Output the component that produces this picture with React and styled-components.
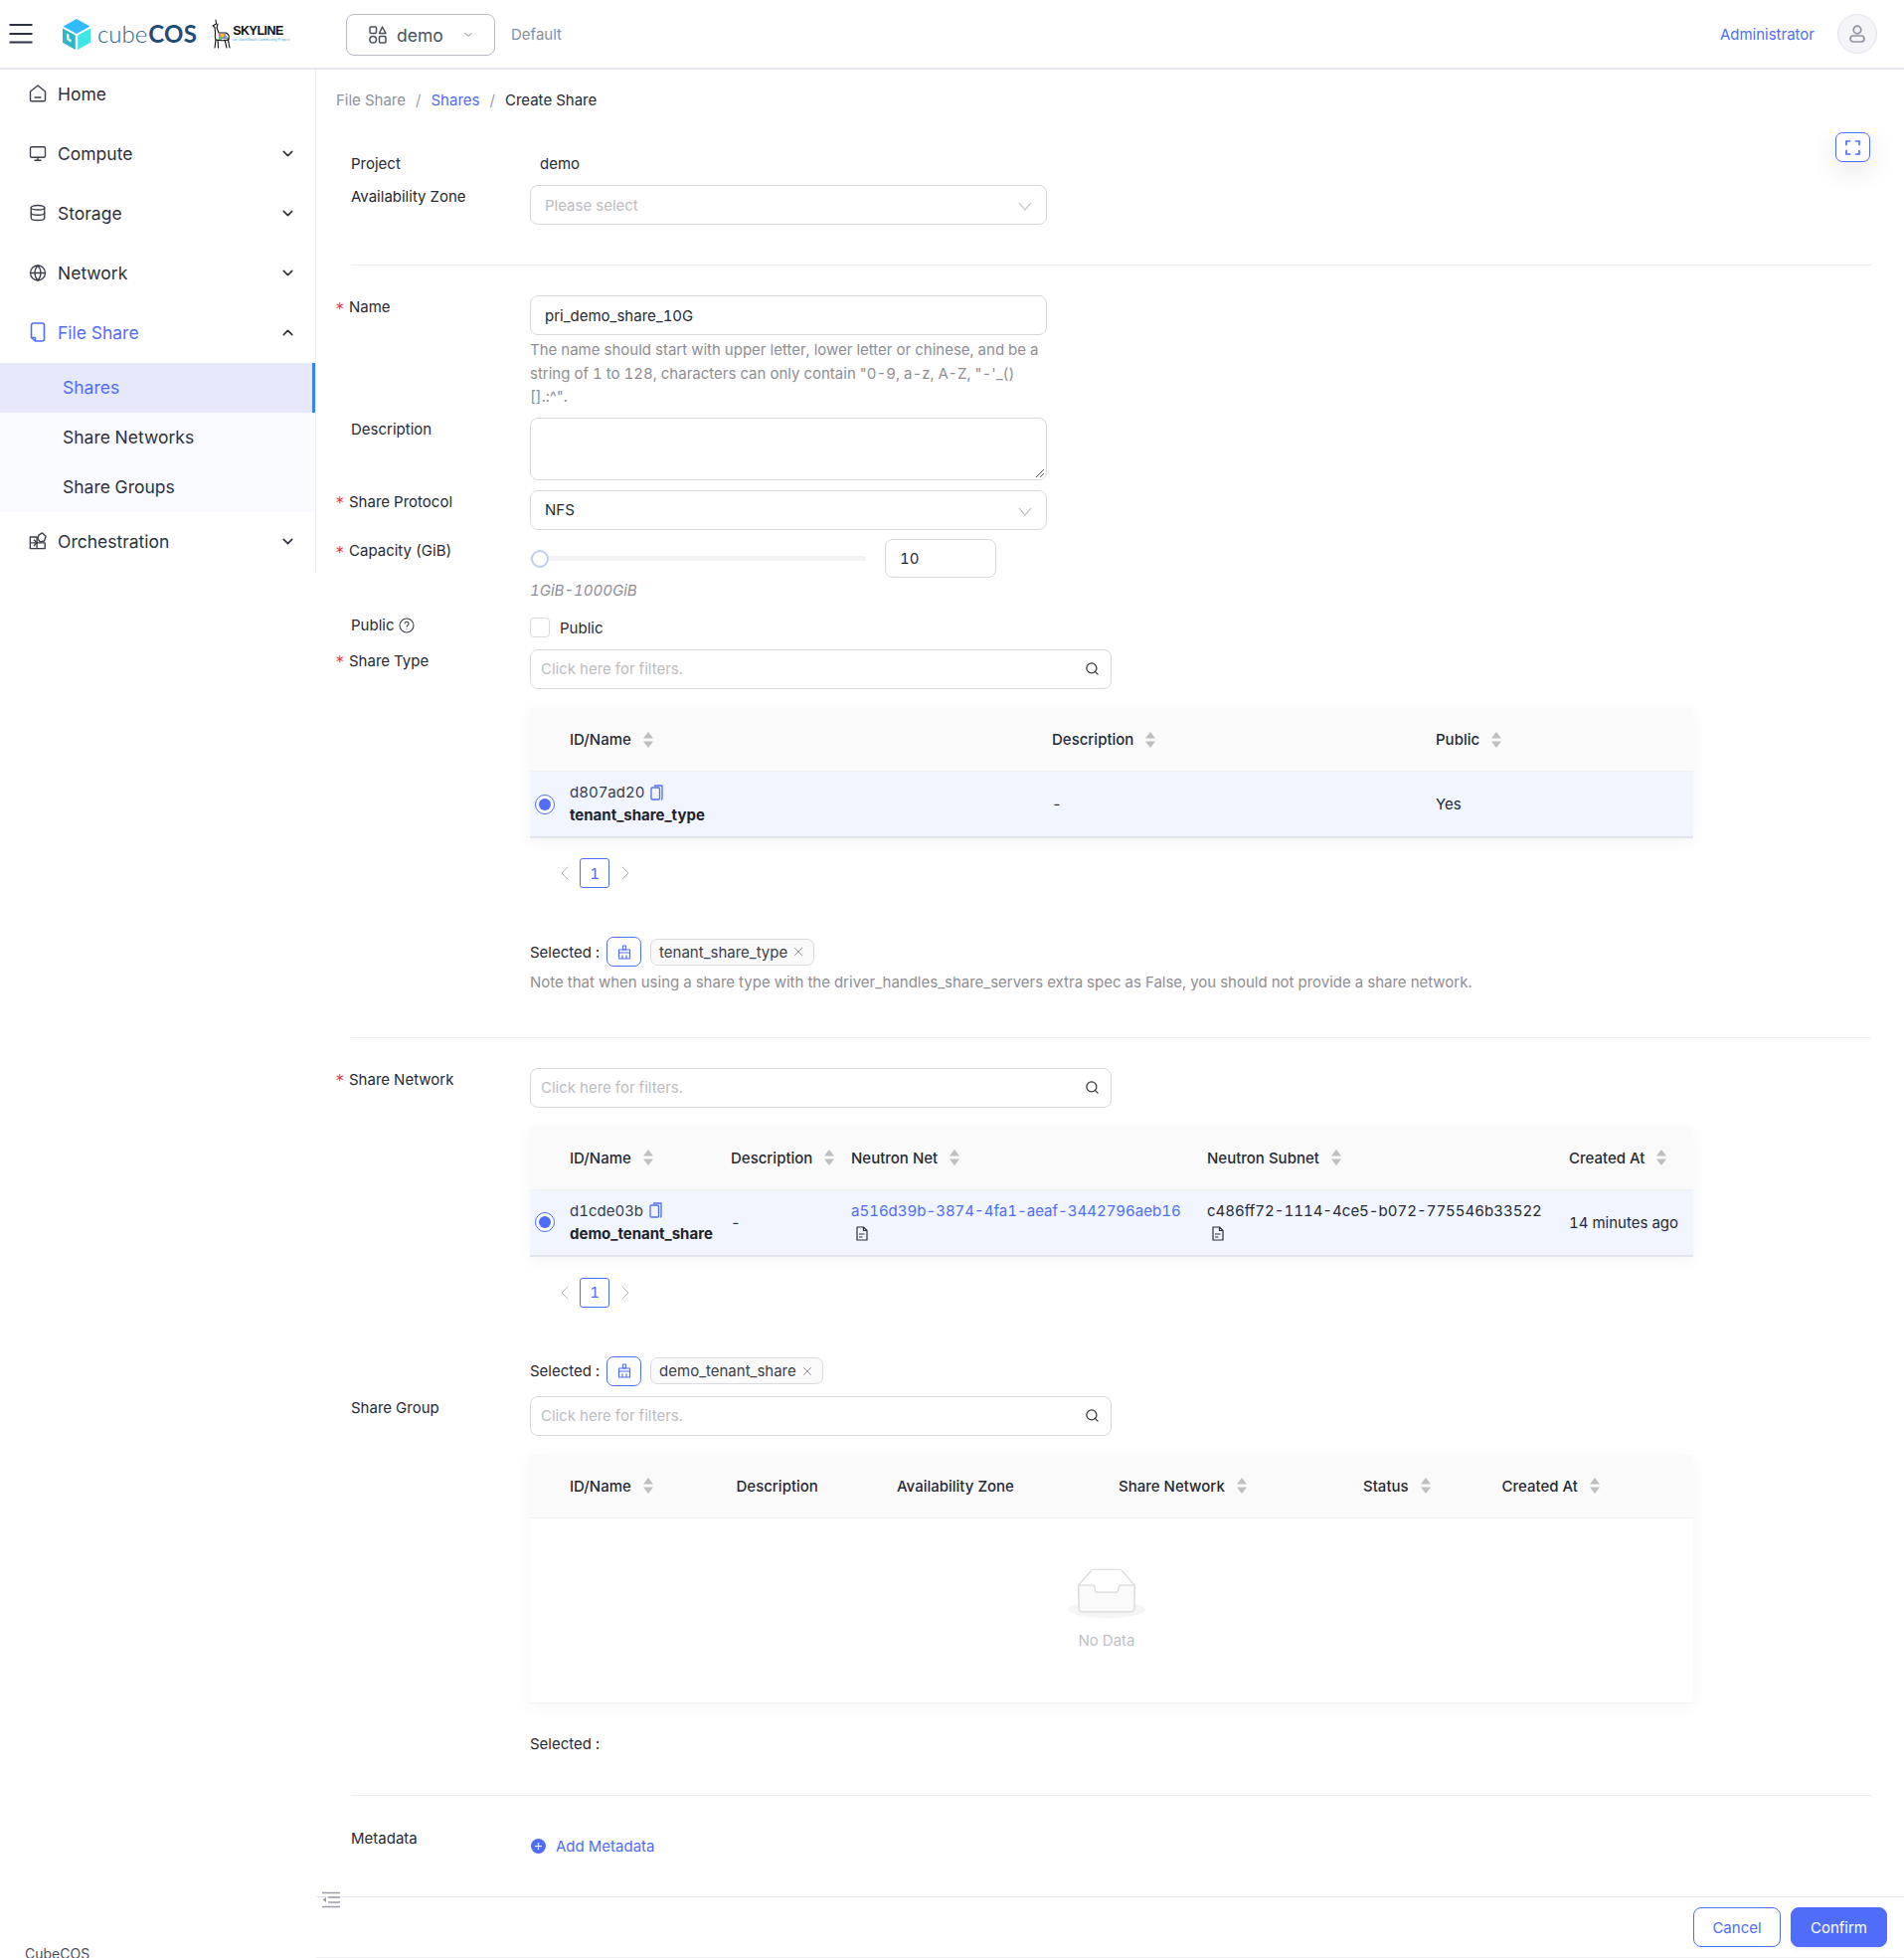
import React from "react";
import styled, { createGlobalStyle } from "styled-components";
import { Monitor, Database, Globe, ChevronDown, ChevronUp, ChevronLeft, ChevronRight, Search, X } from "lucide-react";

const Global = createGlobalStyle`
  html, body { margin: 0; padding: 0; background: #fff; }
  body {
    font-family: "Inter", "Liberation Sans", sans-serif;
    color: #262a33;
    font-size: 15px;
    font-variant: tabular-nums;
    font-feature-settings: "tnum";
  }
  * { box-sizing: border-box; }
`;

const primary = "#4f6df9";

const Page = styled.div`
  width: 1915px;
  height: 1969px;
  overflow: hidden;
  display: flex;
  flex-direction: column;
  background: #fff;
`;

/* ---------- top bar ---------- */
const TopBar = styled.header`
  height: 70px;
  flex: none;
  display: flex;
  align-items: center;
  border-bottom: 2px solid #e8e8f2;
  padding-right: 27px;
`;
const Burger = styled.svg`
  width: 24px;
  height: 20px;
  margin-left: 9px;
`;
const Logo = styled.div`
  display: flex;
  align-items: center;
  margin-left: 30px;
  width: 302px;
`;
const LogoWord = styled.span`
  font-size: 24px;
  line-height: 30px;
  font-weight: 300;
  color: #2f6189;
  margin-left: 7px;
  font-family: "Lato", "Inter", sans-serif;
`;
const LogoStrong = styled.b`
  font-weight: 700;
  color: #1e4c78;
  letter-spacing: 0.3px;
  margin-left: 1px;
`;
const SkyWrap = styled.div`
  display: flex;
  align-items: center;
  margin-left: 13px;
`;
const SkyText = styled.div`
  display: flex;
  flex-direction: column;
  margin-left: 1px;
`;
const SkyName = styled.span`
  font-family: "Liberation Sans", sans-serif;
  font-weight: 700;
  font-size: 12.5px;
  line-height: 13px;
  letter-spacing: -0.5px;
  color: #111;
`;
const SkySub = styled.span`
  font-family: "Liberation Sans", sans-serif;
  font-size: 3.8px;
  line-height: 5px;
  color: #45a8d8;
  white-space: nowrap;
`;
const ProjectButton = styled.div`
  width: 150px;
  height: 42px;
  margin: 2px 0 0 -17px;
  border: 1px solid #b8bbc7;
  border-radius: 8px;
  display: flex;
  align-items: center;
  padding-left: 22px;
  font-size: 17.5px;
  color: #4a4f5c;
`;
const ProjectName = styled.span`
  margin-left: 10px;
  flex: 1;
`;
const ProjectChevron = styled(ChevronDown)`
  margin-right: 20px;
  color: #7b7f8c;
`;
const DomainName = styled.span`
  margin-left: 16px;
  font-size: 15px;
  color: #8a8e9a;
`;
const Spacer = styled.div`
  flex: 1;
`;
const AdminName = styled.span`
  font-size: 15px;
  color: ${primary};
`;
const Avatar = styled.div`
  width: 40px;
  height: 40px;
  border-radius: 50%;
  margin-left: 23px;
  background: #f5f5f9;
  border: 1px solid #e3e3ee;
  display: flex;
  align-items: center;
  justify-content: center;
`;

/* ---------- body / sidebar ---------- */
const Body = styled.div`
  flex: 1;
  display: flex;
  min-height: 0;
`;
const LeftColumn = styled.aside`
  width: 318px;
  flex: none;
  display: flex;
  flex-direction: column;
`;
const Menu = styled.nav`
  height: 505px;
  border-right: 1px solid #ececf2;
`;
const MenuItem = styled.div`
  height: 50px;
  margin-bottom: ${(p) => p.$mb ?? 10}px;
  display: flex;
  align-items: center;
  padding: 0 19px 2px 29px;
  font-size: 17.5px;
  color: ${(p) => (p.$active ? primary : "#2d313b")};
`;
const MenuIcon = styled.span`
  width: 18px;
  height: 20px;
  display: flex;
  align-items: center;
  justify-content: center;
  margin-right: 11px;
`;
const MenuLabel = styled.span`
  flex: 1;
`;
const SubMenu = styled.div`
  background: #f9faff;
  margin-bottom: 5px;
`;
const SubItem = styled.div`
  height: 50px;
  display: flex;
  align-items: center;
  padding: 0 0 2px 63px;
  font-size: 17.5px;
  color: ${(p) => (p.$active ? primary : "#2d313b")};
  background: ${(p) => (p.$active ? "#e6e9fb" : "transparent")};
  border-right: ${(p) => (p.$active ? "3px solid #3b82f6" : "none")};
`;
const Copyright = styled.div`
  margin-top: auto;
  margin-bottom: -6px;
  height: 20px;
  line-height: 20px;
  padding-left: 25px;
  font-size: 14px;
  color: #4a4f5c;
`;

/* ---------- main ---------- */
const Main = styled.main`
  flex: 1;
  min-width: 0;
  position: relative;
  display: flex;
  flex-direction: column;
`;
const Breadcrumb = styled.div`
  margin: 21px 0 0 20px;
  height: 20px;
  line-height: 20px;
  display: flex;
  font-size: 15px;
`;
const Crumb = styled.span`
  color: ${(p) => p.$color};
`;
const CrumbSep = styled.span`
  width: 25.5px;
  text-align: center;
  color: #9a9daa;
`;
const FullscreenButton = styled.div`
  position: absolute;
  right: 34px;
  top: 63px;
  width: 35px;
  height: 30px;
  border: 1px solid ${primary};
  border-radius: 7px;
  background: #fff;
  display: flex;
  align-items: center;
  justify-content: center;
  box-shadow: 0 8px 28px rgba(0, 0, 0, 0.1);
  clip-path: inset(0 -50px -50px -50px);
`;
const Form = styled.div`
  flex: 1;
  margin: 42px 33px 0 20px;
`;
const Row = styled.div`
  display: grid;
  grid-template-columns: 195px 1fr;
  margin-top: ${(p) => p.$mt ?? 0}px;
  min-height: ${(p) => p.$h ?? 0}px;
`;
const Label = styled.label`
  height: 24px;
  line-height: 24px;
  display: flex;
  align-items: center;
  font-size: 15px;
  padding-left: ${(p) => (p.$required ? 0 : 15)}px;
  color: #262a33;
`;
const Star = styled.span`
  width: 13px;
  color: #f5222d;
  font-family: "DejaVu Sans", sans-serif;
  font-size: 15px;
  line-height: 15px;
  padding-top: 4px;
`;
const Control = styled.div`
  min-width: 0;
  padding-top: ${(p) => p.$pt ?? 0}px;
`;
const StaticValue = styled.div`
  line-height: 24px;
  padding-left: 10px;
  font-size: 15px;
`;
const Divider = styled.div`
  height: 1px;
  margin: ${(p) => p.$mt}px 0 0 15px;
  background: #ededf3;
`;
const InputBox = styled.div`
  width: ${(p) => p.$w ?? 520}px;
  height: ${(p) => p.$h ?? 40}px;
  border: 1px solid #d9d9de;
  border-radius: 8px;
  display: flex;
  align-items: center;
  justify-content: space-between;
  padding: 0 ${(p) => p.$pr ?? 14}px 0 ${(p) => p.$pl ?? 14}px;
  background: #fff;
  font-size: 15px;
  color: #262a33;
  position: relative;
`;
const Placeholder = styled.span`
  color: #bcbcc2;
`;
const SelectArrow = styled.svg`
  width: 14px;
  height: 9px;
  margin-top: 3px;
`;
const ResizeGrip = styled.svg`
  position: absolute;
  right: 1px;
  bottom: 1px;
`;
const Help = styled.div`
  margin-top: ${(p) => p.$mt ?? 3}px;
  width: ${(p) => p.$w ?? "520px"};
  font-size: 15px;
  line-height: 23.5px;
  color: #8e8e93;
`;
const HelpItalic = styled(Help)`
  font-style: italic;
  margin-top: 1px;
`;
const SliderRow = styled.div`
  display: flex;
  align-items: center;
  gap: 19px;
`;
const SliderTrack = styled.div`
  width: 338px;
  height: 5px;
  border-radius: 3px;
  background: #f3f3f5;
  position: relative;
`;
const SliderHandle = styled.div`
  position: absolute;
  left: 1px;
  top: -6px;
  width: 18px;
  height: 18px;
  border-radius: 50%;
  background: #fff;
  border: 2px solid #bfcdf9;
`;
const CheckRow = styled.div`
  display: flex;
  align-items: center;
  padding-top: 3px;
`;
const CheckBox = styled.span`
  width: 20px;
  height: 20px;
  border: 1px solid #d9d9de;
  border-radius: 4px;
  margin-right: 10px;
`;
const HelpIcon = styled.svg`
  margin-left: 5px;
`;

/* ---------- tables ---------- */
const Table = styled.div`
  width: 1170px;
  margin-top: ${(p) => p.$mt ?? 16}px;
  box-shadow: 0 4px 16px rgba(0, 0, 0, 0.045);
`;
const TableHead = styled.div`
  display: grid;
  grid-template-columns: ${(p) => p.$cols};
  height: 64px;
  background: #fafafa;
  border-bottom: 1px solid #f1f1f4;
  align-items: center;
  font-size: 15px;
  font-weight: 500;
  color: #262a33;
`;
const HeadCell = styled.div`
  display: flex;
  align-items: center;
  gap: 12px;
  padding-left: ${(p) => p.$pl ?? 0}px;
`;
const TableRow = styled.div`
  display: grid;
  grid-template-columns: ${(p) => p.$cols};
  height: 67px;
  background: #f0f5ff;
  border-bottom: 2px solid #e1e3ee;
  align-items: center;
  font-size: 15px;
`;
const TableEmpty = styled.div`
  height: 186px;
  display: flex;
  flex-direction: column;
  align-items: center;
  padding: 50px 10px 0 0;
  border-bottom: 1px solid #f3f3f6;
`;
const EmptyText = styled.span`
  margin-top: 13px;
  font-size: 15px;
  color: #bfbfc4;
  line-height: 20px;
`;
const NameCell = styled.div`
  display: flex;
  align-items: center;
  padding-left: 5px;
`;
const Radio = styled.span`
  width: 20px;
  height: 20px;
  margin-right: 15px;
  border: 1px solid ${primary};
  border-radius: 50%;
  display: flex;
  align-items: center;
  justify-content: center;
  background: #fff;
  &::after {
    content: "";
    width: 12px;
    height: 12px;
    border-radius: 50%;
    background: ${primary};
  }
`;
const IdBlock = styled.div`
  display: flex;
  flex-direction: column;
  line-height: 23px;
  margin-top: -1px;
`;
const IdLine = styled.div`
  display: flex;
  align-items: center;
  gap: 6px;
  color: #383c46;
`;
const BoldName = styled.b`
  font-weight: 700;
  color: #20232b;
`;
const HashBlock = styled.div`
  display: flex;
  flex-direction: column;
  line-height: 23px;
  margin-top: -1px;
`;
const HashText = styled.span`
  color: ${(p) => p.$color ?? "#262a33"};
`;
const FileIconWrap = styled.div`
  height: 23px;
  padding-left: 5px;
  display: flex;
  align-items: center;
`;
const Pager = styled.div`
  margin: ${(p) => p.$mt}px 0 0 23px;
  display: flex;
  align-items: center;
  gap: 3px;
  color: #b5b5ba;
`;
const PageNumber = styled.span`
  width: 30px;
  height: 30px;
  margin-right: 1px;
  border: 1px solid ${primary};
  border-radius: 3px;
  display: flex;
  align-items: center;
  justify-content: center;
  color: ${primary};
  font-size: 15px;
`;
const SelectedRow = styled.div`
  display: flex;
  align-items: center;
  margin-top: ${(p) => p.$mt}px;
  height: 30px;
  font-size: 15px;
`;
const BroomButton = styled.span`
  width: 35px;
  height: 30px;
  margin-left: 7px;
  border: 1px solid ${primary};
  border-radius: 7px;
  display: flex;
  align-items: center;
  justify-content: center;
`;
const Tag = styled.span`
  height: 27px;
  margin-left: 9px;
  padding: 0 8px;
  display: flex;
  align-items: center;
  gap: 4px;
  border: 1px solid #dcdce0;
  border-radius: 7px;
  background: #fafafa;
  font-size: 15px;
  color: #3a3e48;
`;
const TagClose = styled(X)`
  color: #7a7a7f;
`;
const AddLink = styled.div`
  display: flex;
  align-items: center;
  gap: 10px;
  color: ${primary};
  font-size: 15px;
  padding-left: 1px;
  height: 24px;
`;
const AddDot = styled.span`
  width: 15px;
  height: 15px;
  border-radius: 50%;
  background: ${primary};
  color: #fff;
  display: flex;
  align-items: center;
  justify-content: center;
`;

/* ---------- footer ---------- */
const ActionBar = styled.footer`
  position: relative;
  height: 62px;
  flex: none;
  border-top: 1px solid #e3e3ec;
  border-bottom: 1px solid #f0f0f4;
  display: flex;
  justify-content: flex-end;
  gap: 10px;
  padding: 10px 17px 0 0;
`;
const CollapseIcon = styled.svg`
  position: absolute;
  left: 6px;
  top: -6px;
`;
const GhostButton = styled.button`
  width: 88px;
  height: 40px;
  font: inherit;
  font-size: 15px;
  background: #fff;
  color: ${primary};
  border: 1px solid ${primary};
  border-radius: 8px;
`;
const PrimaryButton = styled(GhostButton)`
  width: 97px;
  background: ${primary};
  color: #fff;
  box-shadow: 0 2px 4px rgba(0, 0, 0, 0.06);
`;

/* ---------- drawings ---------- */
const CubeLogo = () => (
  <svg width="28" height="31" viewBox="0 0 28 31">
    <path d="M14 0 L27.5 7.5 L14 15 L0.5 7.5 Z" fill="#33bbff" />
    <path d="M0 9.5 L12.8 16.6 V31 L0 23.7 Z M4.2 14.5 V21 L8.6 23.6 V21 L6.4 19.8 V15.8 Z" fill="#2fb7c6" fillRule="evenodd" />
    <path d="M28 9.5 L15.2 16.6 V31 L28 23.7 Z" fill="#3fe6e6" />
  </svg>
);
const Llama = () => (
  <svg width="22" height="30" viewBox="0 0 22 30" fill="none" stroke="#111" strokeWidth="1.1" strokeLinecap="round" strokeLinejoin="round">
    <path d="M6 1 L6.5 5 L3 7 L5 8.5 L5.5 14 C5 17 5 19 6 21 L5 29 M8 21 L8.5 29 M15 21 L17 29 M18 19 L20 29" />
    <path d="M8 5 L7 9 L9 14 L16 14 C19 15 20 17 19 21 C15 22 10 22 6 21" />
    <path d="M9 15 h7 v5 h-7 z" fill="#e86ac0" stroke="none" />
    <path d="M11 15 h3 v3 h-3 z" fill="#f5c431" stroke="none" />
    <path d="M14 17 h3 v3 h-3 z" fill="#4aa3e8" stroke="none" />
    <path d="M9 18 h3 v3 h-3 z" fill="#54c06a" stroke="none" />
  </svg>
);
const HomeIcon = () => (
  <svg width="18" height="18" viewBox="0 0 18 18" fill="none" stroke="#3a3e4a" strokeWidth="1.4" strokeLinejoin="round" strokeLinecap="round">
    <path d="M1.5 7 L9 1 L16.5 7 V15.5 a1.2 1.2 0 0 1 -1.2 1.2 H2.7 a1.2 1.2 0 0 1 -1.2 -1.2 Z" />
    <path d="M6 13 H12" />
  </svg>
);
const FileShareIcon = () => (
  <svg width="16" height="20" viewBox="0 0 16 20" fill="none" stroke={primary} strokeWidth="1.6" strokeLinejoin="round">
    <path d="M3.5 1 H12.5 a2 2 0 0 1 2 2 V17 a2 2 0 0 1 -2 2 H5.5 L1.5 15.5 V3 a2 2 0 0 1 2 -2 Z" />
    <path d="M1.5 15.5 H5.5 V19" />
  </svg>
);
const OrchestrationIcon = () => (
  <svg width="20" height="20" viewBox="0 0 20 20" fill="none" stroke="#3a3e4a" strokeWidth="1.5" strokeLinejoin="round">
    <path d="M1.5 5.5 H9 V18.5 H1.5 Z" />
    <path d="M1.5 12 H18 V18.5 H9" />
    <path d="M9 12 L5.5 8.5 M9 12 L5.5 15.5" />
    <path d="M11 3.5 L15 1 L19 4.8 L17.3 10 L12.5 11 L10 7.5 Z" />
  </svg>
);
const ProjectIcon = () => (
  <svg width="18" height="18" viewBox="0 0 18 18" fill="none" stroke="#4a4f5c" strokeWidth="1.5" strokeLinejoin="round">
    <rect x="1" y="1" width="6.5" height="6.5" rx="1.2" />
    <path d="M13.5 1 L17 7.5 H10.5 Z" />
    <circle cx="4.2" cy="13.8" r="3.3" />
    <rect x="10.5" y="10.5" width="6.5" height="6.5" rx="1.2" />
  </svg>
);
const UserIcon = () => (
  <svg width="16" height="18" viewBox="0 0 16 18" fill="none" stroke="#8f93a1" strokeWidth="1.7">
    <circle cx="8" cy="5" r="3.8" />
    <rect x="1" y="11" width="14" height="6" rx="3" />
  </svg>
);
const SortIcon = () => (
  <svg width="10" height="16" viewBox="0 0 10 16" fill="#bfbfc2">
    <path d="M5 0 L10 6.5 H0 Z" />
    <path d="M5 16 L10 9.5 H0 Z" />
  </svg>
);
const CopyIcon = () => (
  <svg width="13" height="16" viewBox="0 0 13 16" fill="none" stroke={primary} strokeWidth="1.3" strokeLinejoin="round">
    <path d="M4 1 H12 V14 a1 1 0 0 1 -1 1 " />
    <rect x="1" y="3" width="8.5" height="12" rx="1.2" />
  </svg>
);
const FileIcon = () => (
  <svg width="12" height="15" viewBox="0 0 12 15" fill="none" stroke="#2b2f38" strokeWidth="1.2" strokeLinejoin="round">
    <path d="M1 1 H7.5 L11 4.5 V14 H1 Z" />
    <path d="M7.5 1 V4.5 H11" />
    <path d="M3 8 H8.5 M3 11 H6.5" />
  </svg>
);
const BroomIcon = () => (
  <svg width="14" height="15" viewBox="0 0 14 15" fill="none" stroke={primary} strokeWidth="1.2" strokeLinejoin="round">
    <path d="M5.5 1 H8.5 V5 H5.5 Z" />
    <path d="M1.5 5 H12.5 V8 H1.5 Z" />
    <path d="M1.5 8 V14 H12.5 V8 M5 10.5 V14 M9 10.5 V14" />
  </svg>
);
const CornersIcon = () => (
  <svg width="15" height="15" viewBox="0 0 15 15" fill="none" stroke={primary} strokeWidth="1.7" strokeLinecap="round">
    <path d="M1 4.5 V1 H4.5 M10.5 1 H14 V4.5 M14 10.5 V14 H10.5 M4.5 14 H1 V10.5" />
  </svg>
);
const ChevronThin = () => (
  <SelectArrow viewBox="0 0 14 9" fill="none" stroke="#b4b4ba" strokeWidth="1.1">
    <path d="M1 1 L7 8 L13 1" />
  </SelectArrow>
);
const EmptyIcon = () => (
  <svg width="78" height="50" viewBox="0 0 64 41">
    <g transform="translate(0 1)" fill="none" fillRule="evenodd">
      <ellipse fill="#f5f5f5" cx="32" cy="33" rx="32" ry="7" />
      <g fillRule="nonzero" stroke="#d9d9d9">
        <path d="M55 12.76L44.854 1.258C44.367.474 43.656 0 42.907 0H21.093c-.749 0-1.46.474-1.947 1.257L9 12.761V22h46v-9.24z" />
        <path
          d="M41.613 15.931c0-1.605.994-2.93 2.227-2.931H55v18.137C55 33.26 53.68 35 52.05 35h-40.1C10.32 35 9 33.259 9 31.137V13h11.16c1.233 0 2.227 1.323 2.227 2.928v.022c0 1.605 1.005 2.901 2.237 2.901h14.752c1.232 0 2.237-1.308 2.237-2.913v-.007z"
          fill="#fafafa"
        />
      </g>
    </g>
  </svg>
);

/* ---------- small composites ---------- */
const FieldLabel = ({ required, children }) => (
  <Label $required={required}>
    {required && <Star>*</Star>}
    {children}
  </Label>
);
const SearchBox = () => (
  <InputBox $w={585} $pl={10} $pr={11}>
    <Placeholder>Click here for filters.</Placeholder>
    <Search size={15} color="#333" strokeWidth={2} />
  </InputBox>
);
const Head = ({ children, sort, pl }) => (
  <HeadCell $pl={pl}>
    {children}
    {sort && <SortIcon />}
  </HeadCell>
);
const PagerBar = ({ mt }) => (
  <Pager $mt={mt}>
    <ChevronLeft size={24} strokeWidth={1} />
    <PageNumber>1</PageNumber>
    <ChevronRight size={24} strokeWidth={1} />
  </Pager>
);
const Selected = ({ mt, tag }) => (
  <SelectedRow $mt={mt}>
    Selected :
    {tag && (
      <>
        <BroomButton>
          <BroomIcon />
        </BroomButton>
        <Tag>
          {tag}
          <TagClose size={14} strokeWidth={1.4} />
        </Tag>
      </>
    )}
  </SelectedRow>
);
const NameBlock = ({ id, name }) => (
  <NameCell>
    <Radio />
    <IdBlock>
      <IdLine>
        {id}
        <CopyIcon />
      </IdLine>
      <BoldName>{name}</BoldName>
    </IdBlock>
  </NameCell>
);

const t1 = "525px 386px 1fr";
const t2 = "202px 121px 358px 364px 125px";
const t3 = "207.5px 161.5px 223px 246px 139.5px 192.5px";

const menuItem = (icon, label, chevron, active, mb) => (
  <MenuItem $active={active} $mb={mb}>
    <MenuIcon>{icon}</MenuIcon>
    <MenuLabel>{label}</MenuLabel>
    {chevron === "down" && <ChevronDown size={17} strokeWidth={2.2} color="#2d313b" />}
    {chevron === "up" && <ChevronUp size={17} strokeWidth={2.2} color="#2d313b" />}
  </MenuItem>
);

export default function App() {
  return (
    <Page>
      <Global />
      <TopBar>
        <Burger viewBox="0 0 24 20" fill="none" stroke="#2c3342" strokeWidth="2">
          <path d="M0.5 1 H23.5 M0.5 10 H23.5 M0.5 18.5 H23.5" />
        </Burger>
        <Logo>
          <CubeLogo />
          <LogoWord>
            cube<LogoStrong>COS</LogoStrong>
          </LogoWord>
          <SkyWrap>
            <Llama />
            <SkyText>
              <SkyName>SKYLINE</SkyName>
              <SkySub>an OpenStack Community Project</SkySub>
            </SkyText>
          </SkyWrap>
        </Logo>
        <ProjectButton>
          <ProjectIcon />
          <ProjectName>demo</ProjectName>
          <ProjectChevron size={12} strokeWidth={2} />
        </ProjectButton>
        <DomainName>Default</DomainName>
        <Spacer />
        <AdminName>Administrator</AdminName>
        <Avatar>
          <UserIcon />
        </Avatar>
      </TopBar>
      <Body>
        <LeftColumn>
          <Menu>
            {menuItem(<HomeIcon />, "Home")}
            {menuItem(<Monitor size={21} strokeWidth={1.8} color="#3a3e4a" />, "Compute", "down")}
            {menuItem(<Database size={20} strokeWidth={1.8} color="#3a3e4a" />, "Storage", "down")}
            {menuItem(<Globe size={21} strokeWidth={1.7} color="#3a3e4a" />, "Network", "down")}
            {menuItem(<FileShareIcon />, "File Share", "up", true, 5)}
            <SubMenu>
              <SubItem $active>Shares</SubItem>
              <SubItem>Share Networks</SubItem>
              <SubItem>Share Groups</SubItem>
            </SubMenu>
            {menuItem(<OrchestrationIcon />, "Orchestration", "down", false, 0)}
          </Menu>
          <Copyright>CubeCOS</Copyright>
        </LeftColumn>
        <Main>
          <Breadcrumb>
            <Crumb $color="#8e919c">File Share</Crumb>
            <CrumbSep>/</CrumbSep>
            <Crumb $color={primary}>Shares</Crumb>
            <CrumbSep>/</CrumbSep>
            <Crumb $color="#262a33">Create Share</Crumb>
          </Breadcrumb>
          <FullscreenButton>
            <CornersIcon />
          </FullscreenButton>
          <Form>
            <Row>
              <FieldLabel>Project</FieldLabel>
              <StaticValue>demo</StaticValue>
            </Row>
            <Row $mt={9}>
              <FieldLabel>Availability Zone</FieldLabel>
              <InputBox>
                <Placeholder>Please select</Placeholder>
                <ChevronThin />
              </InputBox>
            </Row>
            <Divider $mt={40} />

            <Row $mt={30}>
              <FieldLabel required>Name</FieldLabel>
              <Control>
                <InputBox>pri_demo_share_10G</InputBox>
                <Help>
                  The name should start with upper letter, lower letter or chinese, and be a string of 1 to 128, characters can only contain "0-9, a-z, A-Z, "-'_()
                  <br />
                  [].:^".
                </Help>
              </Control>
            </Row>
            <Row $mt={9}>
              <FieldLabel>Description</FieldLabel>
              <InputBox $h={63}>
                <ResizeGrip width="10" height="10" viewBox="0 0 10 10" stroke="#555" strokeWidth="1">
                  <path d="M1 9 L9 1 M5 9 L9 5" />
                </ResizeGrip>
              </InputBox>
            </Row>
            <Row $mt={10}>
              <FieldLabel required>Share Protocol</FieldLabel>
              <InputBox>
                NFS
                <ChevronThin />
              </InputBox>
            </Row>
            <Row $mt={9.5}>
              <FieldLabel required>Capacity (GiB)</FieldLabel>
              <Control>
                <SliderRow>
                  <SliderTrack>
                    <SliderHandle />
                  </SliderTrack>
                  <InputBox $w={112} $h={39}>10</InputBox>
                </SliderRow>
                <HelpItalic>1GiB-1000GiB</HelpItalic>
              </Control>
            </Row>
            <Row $mt={11} $h={26}>
              <FieldLabel>
                Public
                <HelpIcon width="16" height="16" viewBox="0 0 16 16" fill="none" stroke="#3a3e4a" strokeWidth="1.1">
                  <circle cx="8" cy="8" r="7" />
                  <path d="M6 6.2 a2 2 0 1 1 3 1.8 c-.7.4-1 .8-1 1.6 M8 11.4 v.8" />
                </HelpIcon>
              </FieldLabel>
              <CheckRow>
                <CheckBox />
                Public
              </CheckRow>
            </Row>
            <Row $mt={10}>
              <FieldLabel required>Share Type</FieldLabel>
              <Control>
                <SearchBox />
                <Table $mt={19.5}>
                  <TableHead $cols={t1}>
                    <Head sort pl={40}>ID/Name</Head>
                    <Head sort>Description</Head>
                    <Head sort>Public</Head>
                  </TableHead>
                  <TableRow $cols={t1}>
                    <NameBlock id="d807ad20" name="tenant_share_type" />
                    <div>-</div>
                    <div>Yes</div>
                  </TableRow>
                </Table>
                <PagerBar mt={20} />
                <Selected mt={49} tag="tenant_share_type" />
                <Help $mt={4} $w="1170px">
                  Note that when using a share type with the driver_handles_share_servers extra spec as False, you should not provide a share network.
                </Help>
              </Control>
            </Row>
            <Divider $mt={43} />

            <Row $mt={30}>
              <FieldLabel required>Share Network</FieldLabel>
              <Control>
                <SearchBox />
                <Table $mt={19}>
                  <TableHead $cols={t2}>
                    <Head sort pl={40}>ID/Name</Head>
                    <Head sort>Description</Head>
                    <Head sort>Neutron Net</Head>
                    <Head sort>Neutron Subnet</Head>
                    <Head sort>Created At</Head>
                  </TableHead>
                  <TableRow $cols={t2}>
                    <NameBlock id="d1cde03b" name="demo_tenant_share" />
                    <div>-</div>
                    <HashBlock>
                      <HashText $color={primary}>a516d39b-3874-4fa1-aeaf-3442796aeb16</HashText>
                      <FileIconWrap>
                        <FileIcon />
                      </FileIconWrap>
                    </HashBlock>
                    <HashBlock>
                      <HashText>c486ff72-1114-4ce5-b072-775546b33522</HashText>
                      <FileIconWrap>
                        <FileIcon />
                      </FileIconWrap>
                    </HashBlock>
                    <div>14 minutes ago</div>
                  </TableRow>
                </Table>
                <PagerBar mt={21} />
                <Selected mt={49} tag="demo_tenant_share" />
              </Control>
            </Row>
            <Row $mt={10}>
              <FieldLabel>Share Group</FieldLabel>
              <Control>
                <SearchBox />
                <Table $mt={19}>
                  <TableHead $cols={t3}>
                    <Head sort pl={40}>ID/Name</Head>
                    <Head>Description</Head>
                    <Head>Availability Zone</Head>
                    <Head sort>Share Network</Head>
                    <Head sort>Status</Head>
                    <Head sort>Created At</Head>
                  </TableHead>
                  <TableEmpty>
                    <EmptyIcon />
                    <EmptyText>No Data</EmptyText>
                  </TableEmpty>
                </Table>
                <Selected mt={25.5} />
              </Control>
            </Row>
            <Divider $mt={37} />
            <Row $mt={31}>
              <FieldLabel>Metadata</FieldLabel>
              <Control $pt={7}>
                <AddLink>
                  <AddDot>
                    <svg width="9" height="9" viewBox="0 0 9 9" stroke="#fff" strokeWidth="1.2">
                      <path d="M4.5 1 V8 M1 4.5 H8" />
                    </svg>
                  </AddDot>
                  Add Metadata
                </AddLink>
              </Control>
            </Row>
          </Form>
          <ActionBar>
            <CollapseIcon width="18" height="17" viewBox="0 0 18 17" fill="none" stroke="#9a9ca8" strokeWidth="1.6">
              <path d="M0 1.5 H18 M6 6 H18 M6 11 H18 M0 15.5 H18" />
              <path d="M0.5 8.5 L4 6 V11 Z" fill="#9a9ca8" stroke="none" />
            </CollapseIcon>
            <GhostButton>Cancel</GhostButton>
            <PrimaryButton>Confirm</PrimaryButton>
          </ActionBar>
        </Main>
      </Body>
    </Page>
  );
}
